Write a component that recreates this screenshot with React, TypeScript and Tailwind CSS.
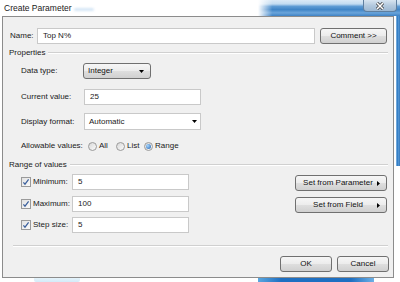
import clsx from 'clsx';
import type { ReactNode } from 'react';

const Btn = ({ children, className }: { children: ReactNode; className?: string }) => (
  <button
    type="button"
    className={clsx(
      'h-[16px] border border-[#707070] rounded-[3px] bg-[linear-gradient(to_bottom,#f6f6f6_0%,#ececec_48%,#dedede_52%,#d0d0d0_100%)] flex items-center text-[8px] leading-none text-[#111]',
      className
    )}
  >
    {children}
  </button>
);

const Field = ({ value, className }: { value?: string; className?: string }) => (
  <div className={clsx('h-[16px] bg-white border border-[#c9c9c9] flex items-center pl-[5px]', className)}>
    {value}
  </div>
);

const Arrow = () => (
  <svg width="5" height="3" viewBox="0 0 5 3">
    <path d="M0 0h5L2.5 3z" fill="#000" />
  </svg>
);

const Radio = ({ checked }: { checked?: boolean }) => (
  <span className="w-[9px] h-[9px] rounded-full border border-[#9a9a9a] bg-[linear-gradient(135deg,#d8d8d8,#fbfbfb)] flex items-center justify-center">
    {checked && <span className="w-[5px] h-[5px] rounded-full bg-[radial-gradient(circle_at_35%_35%,#a9d8ff,#1f5fae)]" />}
  </span>
);

const Check = () => (
  <span className="w-[10px] h-[10px] border border-[#9a9a9a] bg-[linear-gradient(135deg,#e2e2e2,#fafafa)] flex items-center justify-center">
    <svg width="8" height="8" viewBox="0 0 8 8">
      <path d="M1.4 4.3 3 6.2 6.6 1.4" fill="none" stroke="#3a5f9c" strokeWidth="1.2" />
    </svg>
  </span>
);

const Etched = ({ className }: { className?: string }) => (
  <div className={clsx('h-[2px] border-t border-[#d0d0d0] border-b border-b-white', className)} />
);

const rangeRows = [
  { label: 'Minimum:', value: '5', button: 'Set from Parameter' },
  { label: 'Maximum:', value: '100', button: 'Set from Field' },
  { label: 'Step size:', value: '5' },
];

export default function App() {
  return (
    <div className="w-[400px] h-[282px] bg-white overflow-hidden flex flex-col font-['Liberation_Sans',Arial,sans-serif] text-[8px] text-[#1a1a1a]">
      {/* Title bar */}
      <div className="h-[16px] flex shrink-0">
        <div className="flex-1 pl-[4px] leading-[16px] text-[8.5px] flex items-center">
          <span>Create Parameter</span>
          <span className="ml-[2px] mt-[3px] w-[20px] h-[3px] rounded-full bg-[#d6e7f6] blur-[1px]" />
        </div>
        <div className="w-[142px] flex justify-end bg-[linear-gradient(to_right,#ffffff_0%,rgba(255,255,255,0)_10%),linear-gradient(to_bottom,#dbe9f6_0%,#c2dbf1_25%,#5e9bd4_40%,#3f84c6_60%,#6aa4da_80%,#3e82c5_100%)]">
          <div className="mr-[3px] w-[34px] h-[12px] border border-t-0 border-[#5f7f9f] rounded-b-[4px] bg-[linear-gradient(to_bottom,#d7e4f0,#b3c9de_50%,#9db8d2)] flex items-center justify-center">
            <svg width="10" height="8" viewBox="0 0 10 8">
              <path d="M2 1l6 6M8 1 2 7" stroke="#333" strokeWidth="3" />
              <path d="M2 1l6 6M8 1 2 7" stroke="#fff" strokeWidth="1.6" />
            </svg>
          </div>
        </div>
      </div>

      {/* Window body + right desktop gutter */}
      <div className="flex flex-1 min-h-0">
        <div className="ml-[2px] w-[392px] border border-[#8c8c8c] bg-[#f0f0f0] flex flex-col">
          {/* Name */}
          <div className="flex items-center mt-[11px] ml-[7px]">
            <span className="w-[27px]">Name:</span>
            <Field value="Top N%" className="w-[278px] h-[15px]" />
            <Btn className="ml-[5px] w-[67px] justify-center">Comment &gt;&gt;</Btn>
          </div>

          {/* Properties */}
          <div className="flex items-center mt-[4px] ml-[6px] mr-[5px] h-[10px]">
            <span>Properties</span>
            <Etched className="flex-1 ml-[3px]" />
          </div>

          <div className="flex items-center mt-[5px] ml-[18px]">
            <span className="w-[62px]">Data type:</span>
            <Btn className="w-[68px] h-[15px] justify-between pl-[4px] pr-[6px]">
              <span>Integer</span>
              <Arrow />
            </Btn>
          </div>

          <div className="flex items-center mt-[10px] ml-[18px]">
            <span className="w-[63px]">Current value:</span>
            <Field value="25" className="w-[117px]" />
          </div>

          <div className="flex items-center mt-[8px] ml-[18px]">
            <span className="w-[63px]">Display format:</span>
            <div className="w-[117px] h-[17px] bg-white border border-[#c9c9c9] flex items-center justify-between pl-[4px] pr-[3px]">
              <span>Automatic</span>
              <Arrow />
            </div>
          </div>

          <div className="flex items-center mt-[10px] ml-[18px] h-[12px]">
            <span className="w-[67px]">Allowable values:</span>
            <div className="w-[28px] flex items-center gap-[2px]">
              <Radio />
              <span>All</span>
            </div>
            <div className="w-[28px] flex items-center gap-[2px]">
              <Radio />
              <span>List</span>
            </div>
            <div className="flex items-center gap-[2px]">
              <Radio checked />
              <span>Range</span>
            </div>
          </div>

          {/* Range of values */}
          <div className="flex items-center mt-[8px] ml-[6px] mr-[5px] h-[10px]">
            <span>Range of values</span>
            <Etched className="flex-1 ml-[3px]" />
          </div>

          <div className="flex flex-col">
            {rangeRows.map((row, i) => (
              <div key={row.label} className={clsx('flex items-start ml-[18px]', i === 1 ? 'mt-[5px]' : 'mt-[4px]')}>
                <div className="h-[16px] flex items-center">
                  <Check />
                </div>
                <span className="ml-[2px] w-[39px] h-[16px] flex items-center">{row.label}</span>
                <Field value={row.value} className="w-[117px]" />
                {row.button && (
                  <Btn className="ml-[106px] mt-[1px] w-[92px] relative justify-center">
                    <span className="-ml-[6px]">{row.button}</span>
                    <svg className="absolute right-[6px] top-[5px]" width="3" height="5" viewBox="0 0 3 5">
                      <path d="M0 0v5l3-2.5z" fill="#000" />
                    </svg>
                  </Btn>
                )}
              </div>
            ))}
          </div>

          <Etched className="mt-[12px] ml-[10px] mr-[5px]" />

          <div className="flex justify-end gap-[5px] mt-[9px] pr-[4px]">
            <Btn className="w-[52px] justify-center">OK</Btn>
            <Btn className="w-[52px] justify-center">Cancel</Btn>
          </div>
        </div>
        <div className="flex-1 flex">
          <div className="ml-[2px] flex-1 h-[150px] bg-[linear-gradient(to_right,#8cbce6,#2f7bc4_40%,#5a9bd6_70%,#2a6fb6)]" />
        </div>
      </div>

      {/* Desktop showing below */}
      <div className="h-[4px] shrink-0 flex">
        <div className="ml-[34px] w-[46px] h-[4px] bg-[linear-gradient(to_bottom,#e6f3fb,#d2ebf9)] rounded-b-[2px]" />
        <div className="ml-[178px] w-[116px] h-[4px] bg-[linear-gradient(to_right,#5aa7e0,#1e6fc2_20%,#1e6fc2_80%,#6cb0e6)]" />
      </div>
    </div>
  );
}
